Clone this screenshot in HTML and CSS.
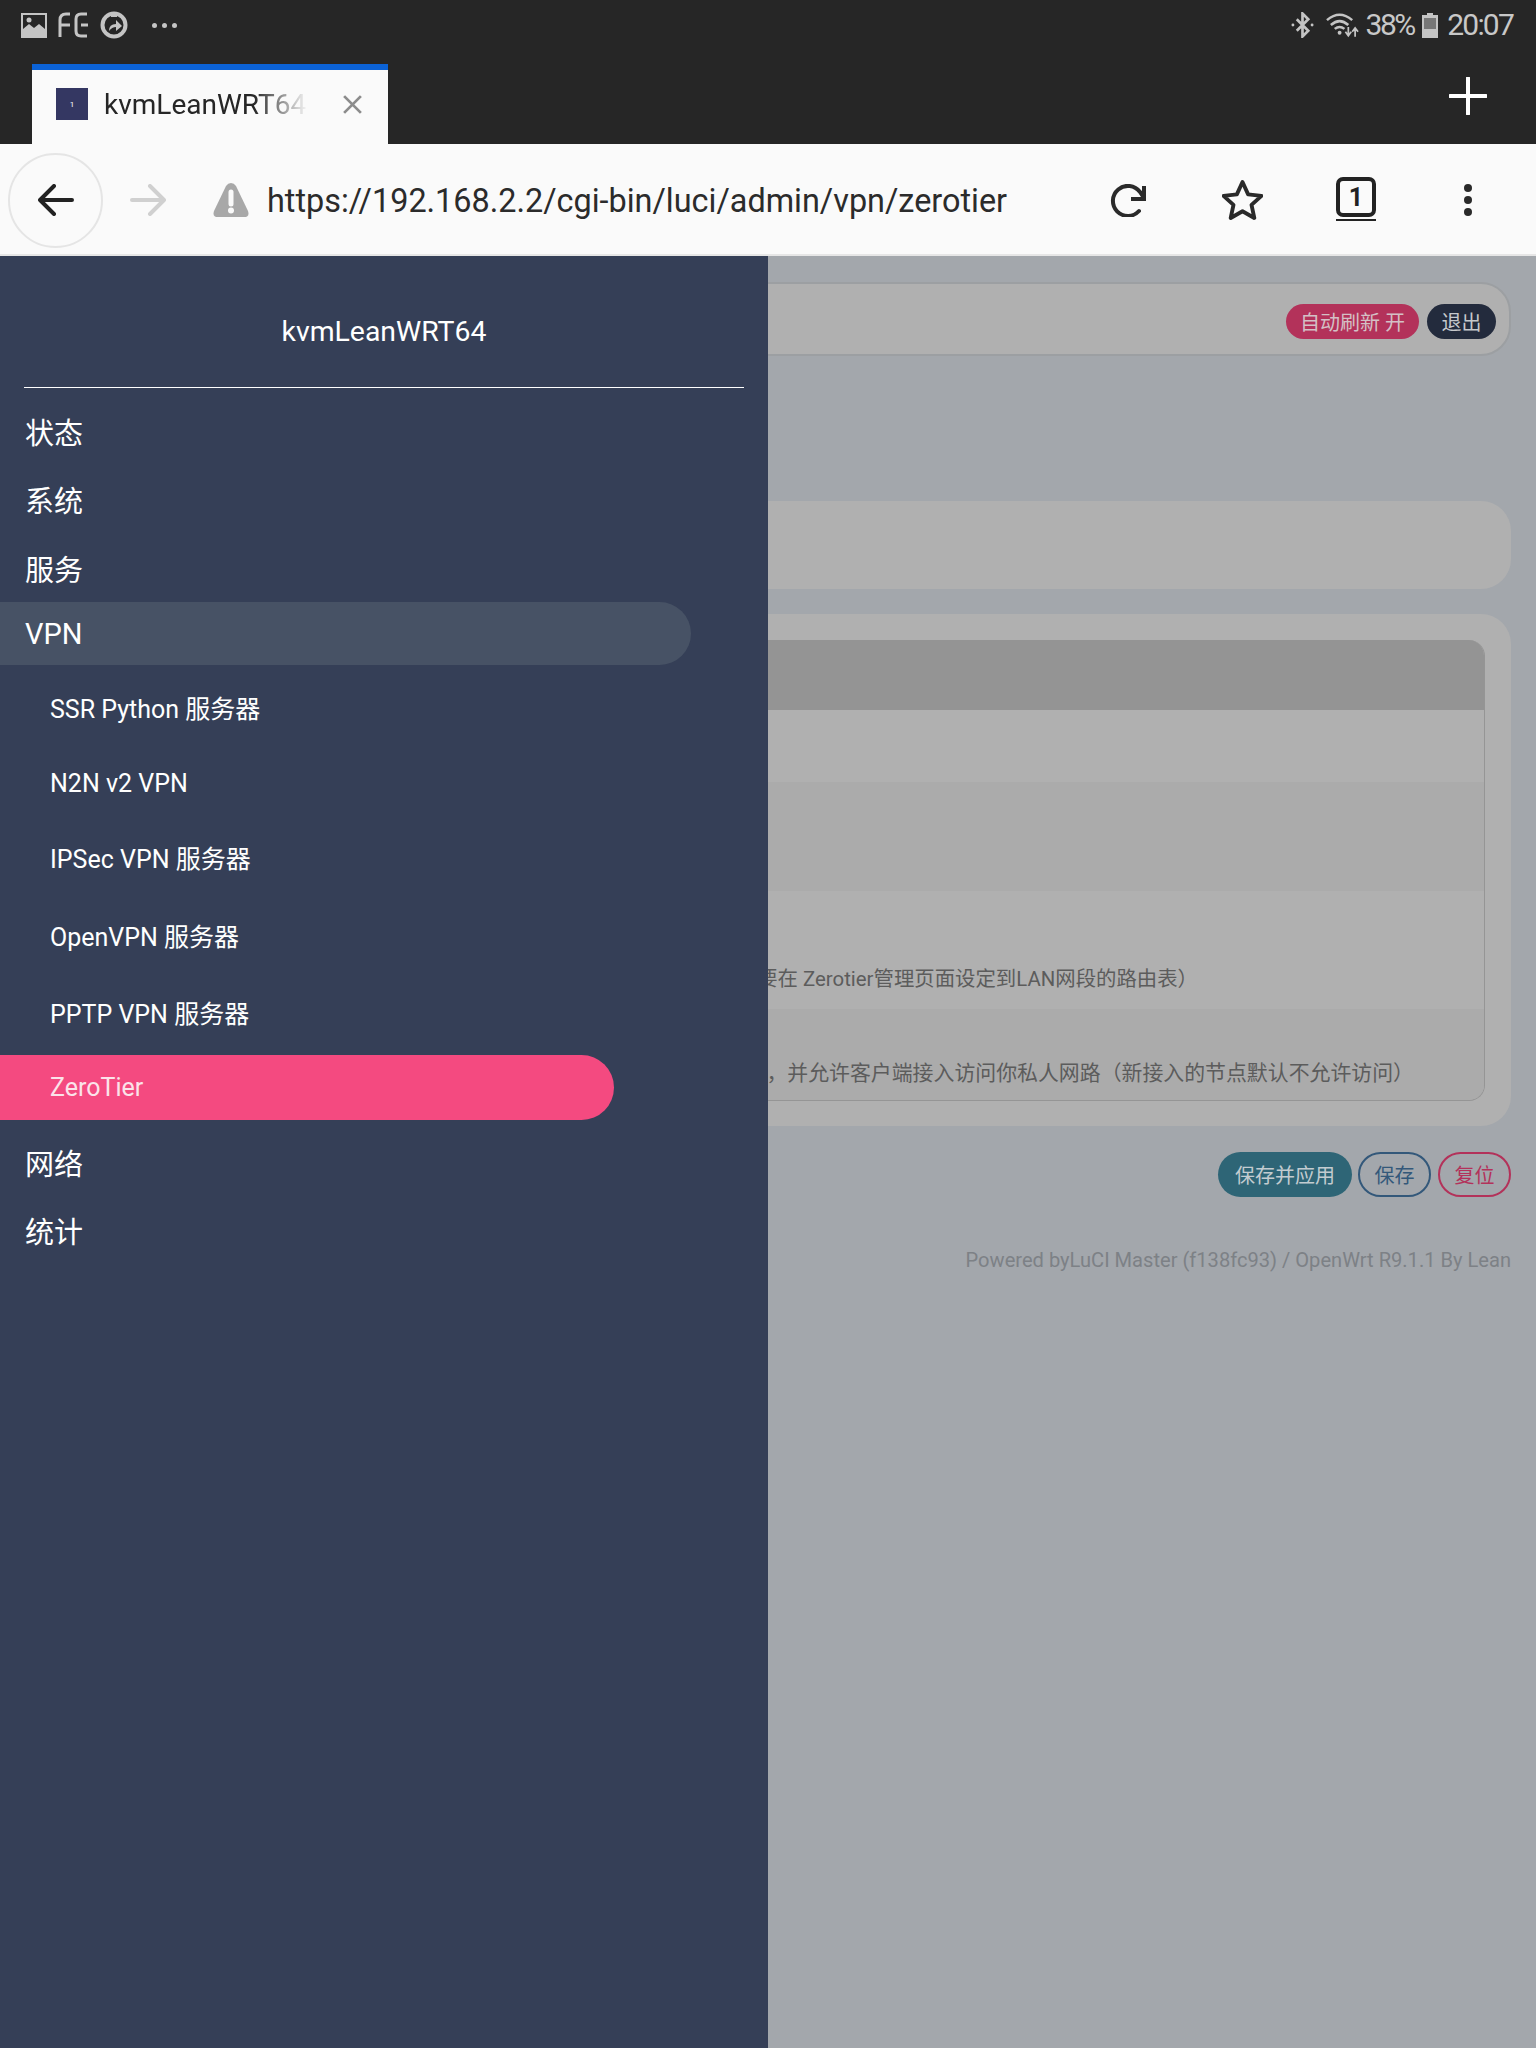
FILE: index.html
```html
<!DOCTYPE html>
<html lang="zh">
<head>
<meta charset="utf-8">
<title>kvmLeanWRT64</title>
<link rel="stylesheet" href="styles.css">
</head>
<body>
<header class="chrome">
  <div class="status">
    <div class="status-left">
      <svg class="ic-pic" viewBox="0 0 26 25"><rect x="1" y="1" width="24" height="23" fill="none" stroke="#c4c4c4" stroke-width="2"/><path d="M2 23V16l6-5 5 4 5-4 6 5v7z" fill="#c4c4c4"/><circle cx="8" cy="7" r="2.5" fill="#c4c4c4"/></svg>
      <svg class="ic-fe" viewBox="0 0 31 26"><path d="M2 25V8q0-6 6-6h4M2 13h10M29 2h-6q-5 0-5 5v12q0 5 5 5h6M23 13h7" fill="none" stroke="#c4c4c4" stroke-width="3"/></svg>
      <svg class="ic-share" viewBox="0 0 28 28"><circle cx="14" cy="14" r="11.500" fill="none" stroke="#c4c4c4" stroke-width="4"/><rect x="11" y="1" width="6" height="5" fill="#c4c4c4"/><path d="M9 20q0-7 7-7V9l6 6-6 5v-4q-4 0-7 4z" fill="#c4c4c4"/></svg>
      <span class="dots"><i></i><i></i><i></i></span>
    </div>
    <div class="status-right">
      <svg class="ic-bt" viewBox="0 0 24 26"><path d="M6 7l12 12-6 6V1l6 6L6 19" fill="none" stroke="#c4c4c4" stroke-width="2.800"/><circle cx="2" cy="13" r="1.500" fill="#c4c4c4"/><circle cx="22" cy="13" r="1.500" fill="#c4c4c4"/></svg>
      <svg class="ic-wifi" viewBox="0 0 34 26"><path d="M1 8q13-11 26 0M5 13q9-8 18 0M9 17q5-4 10 0" fill="none" stroke="#c4c4c4" stroke-width="2.600"/><circle cx="14" cy="21" r="2" fill="#c4c4c4"/><path d="M23 15v8M20 20l3 4 3-4M30 25v-8M27 20l3-4 3 4" fill="none" stroke="#c4c4c4" stroke-width="1.800"/></svg>
      <span class="pct">38%</span>
      <svg class="ic-bat" viewBox="0 0 16 25"><rect x="5" y="0" width="6" height="3" fill="#c4c4c4"/><rect x="0" y="2" width="16" height="23" fill="#c4c4c4"/><rect x="2" y="5" width="12" height="11" fill="#777"/></svg>
      <span class="time">20:07</span>
    </div>
  </div>
  <div class="tabstrip">
    <div class="tab">
      <span class="favicon">1</span>
      <span class="tab-title">kvmLeanWRT64</span>
      <svg class="ic-close" viewBox="0 0 20 20"><path d="M2 2l16 16M18 2L2 18" stroke="#8c8c8c" stroke-width="2.600" fill="none"/></svg>
    </div>
    <svg class="ic-plus" viewBox="0 0 38 38"><path d="M19 1v36M1 19h36" stroke="#fff" stroke-width="4" stroke-linecap="round" fill="none"/></svg>
  </div>
  <div class="toolbar">
    <span class="back-ring">
      <svg class="ic-nav" viewBox="0 0 36 32"><path d="M34 16H2M16 2L2 16l14 14" fill="none" stroke="#222" stroke-width="4" stroke-linecap="round" stroke-linejoin="round"/></svg>
    </span>
    <svg class="ic-nav ic-fwd" viewBox="0 0 36 32"><path d="M2 16h32M20 2l14 14-14 14" fill="none" stroke="#d0d0d0" stroke-width="4" stroke-linecap="round" stroke-linejoin="round"/></svg>
    <svg class="ic-warn" viewBox="0 0 36 36"><path d="M18 1q3 0 5 3l12 25q2 6-4 6H5q-6 0-4-6L13 4q2-3 5-3z" fill="#a8a8a8"/><path d="M18 10v12" stroke="#fafafa" stroke-width="5" stroke-linecap="round"/><circle cx="18" cy="28.500" r="3" fill="#fafafa"/></svg>
    <span class="url">https://192.168.2.2/cgi-bin/luci/admin/vpn/zerotier</span>
    <div class="tools">
      <svg class="ic-reload" viewBox="0 0 37 33"><path d="M30 27A15 15 0 1 1 31 8l4 6" fill="none" stroke="#2a2a2a" stroke-width="4" stroke-linecap="round"/><path d="M35 2v13H22" fill="none" stroke="#2a2a2a" stroke-width="4"/></svg>
      <svg class="ic-star" viewBox="1 1 40 39"><path d="M21 3l5.500 12 13 1.500-9.700 8.800 2.700 12.700L21 31.500 9.500 38l2.700-12.700L2.500 16.500l13-1.500z" fill="none" stroke="#2a2a2a" stroke-width="3.800" stroke-linejoin="round"/></svg>
      <span class="tabcount">1</span>
      <span class="kebab"><i></i><i></i><i></i></span>
    </div>
  </div>
</header>

<main class="page">
  <div class="topbar">
    <span class="pill pill-red">自动刷新 开</span>
    <span class="pill pill-dark">退出</span>
  </div>
  <div class="panel panel-desc"></div>
  <div class="panel panel-form">
    <div class="table">
      <div class="thead"></div>
      <div class="row row-a"></div>
      <div class="row row-b"></div>
      <div class="row row-c"><span class="hint">需要在 Zerotier管理页面设定到LAN网段的路由表）</span></div>
      <div class="row row-d"><span class="hint">允许客户端访问你私人网路，并允许客户端接入访问你私人网路（新接入的节点默认不允许访问）</span></div>
    </div>
  </div>
  <div class="actions">
    <span class="btn btn-apply">保存并应用</span>
    <span class="btn btn-save">保存</span>
    <span class="btn btn-reset">复位</span>
  </div>
  <footer class="foot">Powered byLuCI Master (f138fc93) / OpenWrt R9.1.1 By Lean</footer>
</main>

<nav class="drawer">
  <div class="brand">kvmLeanWRT64</div>
  <ul class="menu">
    <li class="m m1">状态</li>
    <li class="m m2">系统</li>
    <li class="m m3">服务</li>
    <li class="m m-vpn">VPN</li>
    <li class="s s1">SSR Python 服务器</li>
    <li class="s s2">N2N v2 VPN</li>
    <li class="s s3">IPSec VPN 服务器</li>
    <li class="s s4">OpenVPN 服务器</li>
    <li class="s s5">PPTP VPN 服务器</li>
    <li class="s s-active">ZeroTier</li>
    <li class="m m5">网络</li>
    <li class="m m6">统计</li>
  </ul>
</nav>
</body>
</html>
```

FILE: styles.css
```css
* { box-sizing: border-box; }
html, body { margin: 0; padding: 0; }
body {
  width: 1536px;
  height: 2048px;
  position: relative;
  overflow: hidden;
  background: #a3a7ac;
  font-family: Roboto, "Noto Sans CJK SC", sans-serif;
}
ul { list-style: none; margin: 0; padding: 0; }

/* browser chrome */
.chrome { background: #262626; }
.status { height: 64px; display: flex; justify-content: space-between; align-items: center; padding: 0 23px 14px 21px; color: #c8c8c8; }
.status-left, .status-right { display: flex; align-items: center; }
.ic-pic { width: 26px; height: 25px; }
.ic-fe { width: 31px; height: 26px; margin-left: 11px; }
.ic-share { width: 28px; height: 28px; margin-left: 11px; }
.dots { display: flex; gap: 5px; margin-left: 24px; }
.dots i { width: 5px; height: 5px; border-radius: 50%; background: #c4c4c4; }
.ic-bt { width: 23px; height: 26px; }
.ic-wifi { width: 33px; height: 26px; margin-left: 12px; }
.pct { font-size: 30px; letter-spacing: -2.500px; margin-left: 7px; line-height: 26px; }
.ic-bat { width: 16px; height: 25px; margin-left: 8.500px; }
.time { font-size: 30px; letter-spacing: -1.800px; margin-left: 9px; line-height: 26px; }

.tabstrip { height: 80px; position: relative; display: flex; justify-content: space-between; }
.tab { width: 356px; height: 80px; margin-left: 32px; background: #fafafa; border-top: 6px solid #0b62d6; display: flex; align-items: center; padding: 0 0 0 24px; position: relative; }
.favicon { width: 32px; height: 32px; background: #343762; color: #fff; font-size: 8px; display: flex; align-items: center; justify-content: center; margin-top: -6px; }
.tab-title { font-size: 28px; margin-left: 16px; width: 206px; overflow: hidden; white-space: nowrap; color: #262626; margin-top: -5px; -webkit-mask-image: linear-gradient(90deg, #000 150px, transparent 204px); mask-image: linear-gradient(90deg, #000 150px, transparent 204px); }
.ic-close { width: 21px; height: 21px; margin-left: 32px; margin-top: -6px; }
.ic-plus { width: 38px; height: 38px; margin: 13px 49px 0 0; }

.toolbar { height: 112px; background: #fafafa; border-bottom: 2px solid #e6e6e6; padding-top: 2px; display: flex; align-items: center; position: relative; }
.back-ring { width: 95px; height: 95px; margin-left: 8px; border: 2px solid #e5e5e5; border-radius: 50%; display: flex; align-items: center; justify-content: center; flex: none; }
.ic-nav { width: 36px; height: 32px; flex: none; }
.ic-fwd { margin-left: 27px; }
.ic-warn { width: 36px; height: 36px; margin-left: 47px; flex: none; }
.url { font-size: 32.400px; color: #2b2b2b; margin: 2px 0 0 18px; white-space: nowrap; }
.tools { position: absolute; right: 0; top: 0; bottom: 0; width: 460px; }
.ic-reload { position: absolute; left: 33px; top: 40px; width: 37px; height: 33px; }
.ic-star { position: absolute; left: 145.500px; top: 35.500px; width: 41px; height: 40px; }
.tabcount { position: absolute; left: 260px; top: 33px; width: 40px; height: 40px; border: 4.500px solid #222; border-radius: 7px; font-size: 25px; font-weight: 700; color: #222; display: flex; align-items: center; justify-content: center; }
.tabcount::after { content: ""; position: absolute; left: -4px; right: -4px; top: 38px; height: 2px; background: #222; }
.kebab { position: absolute; left: 388px; top: 40px; display: flex; flex-direction: column; gap: 4px; }
.kebab i { width: 8px; height: 8px; border-radius: 50%; background: #2a2a2a; }

/* dimmed page */
.page { padding: 26px 25px 0 26px; }
.topbar { height: 74px; background: #b0b0b0; border: 2px solid #9c9fa2; border-radius: 30px; display: flex; justify-content: flex-end; align-items: center; gap: 8px; padding: 4px 13px 0 0; }
.pill { height: 35px; border-radius: 17.500px; display: inline-flex; align-items: center; justify-content: center; font-size: 20px; }
.pill-red { width: 133px; background: #b3325a; color: #d4c0c6; }
.pill-dark { width: 69px; background: #232b3d; color: #c6c8cc; }
.panel { background: #b0b0b0; border-radius: 30px; }
.panel-desc { height: 88px; margin-top: 145px; }
.panel-form { height: 512px; margin-top: 25px; padding: 26px 26px 25px; }
.table { height: 461px; border: 1px solid #959595; border-top: 0; border-radius: 16px; overflow: hidden; display: flex; flex-direction: column; }
.thead { height: 70px; background: #949494; }
.row { position: relative; }
.row-a { height: 72px; background: #b0b0b0; }
.row-b { height: 109px; background: #ababab; }
.row-c { height: 118px; background: #b0b0b0; }
.row-d { flex: 1; background: #ababab; }
.hint { position: absolute; color: #5c5c5c; white-space: nowrap; }
.row-c .hint { top: 71px; right: 286px; font-size: 20.400px; }
.row-d .hint { top: 47px; right: 70px; font-size: 20.900px; }
.actions { display: flex; justify-content: flex-end; gap: 6px; margin-top: 26px; }
.btn { height: 45px; border-radius: 22.500px; font-size: 20px; display: inline-flex; align-items: center; justify-content: center; }
.btn-apply { width: 134px; background: #2e6576; color: #c3ccd0; }
.btn-save { width: 73px; border: 2px solid #33587a; color: #33587a; }
.btn-reset { width: 73px; margin-left: 1px; border: 2px solid #b3325a; color: #b3325a; }
.foot { text-align: right; font-size: 20.100px; color: #7d8186; margin-top: 50px; line-height: 26px; }

/* drawer */
.drawer { position: absolute; left: 0; top: 256px; width: 768px; height: 1792px; background: #353f57; color: #fff; }
.brand { height: 132px; margin: 0 24px; border-bottom: 1px solid #fff; text-align: center; font-size: 28.400px; line-height: 151px; }
.m { font-size: 29px; padding-left: 25px; line-height: 40px; }
.s { font-size: 25px; padding-left: 50px; line-height: 34px; }
.m1 { margin-top: 26px; }
.m2 { margin-top: 28px; }
.m3 { margin-top: 29px; }
.m-vpn { margin-top: 11px; width: 691px; height: 63px; line-height: 65px; background: #475265; border-radius: 0 32px 32px 0; }
.s1 { margin-top: 28px; }
.s2 { margin-top: 40px; }
.s3 { margin-top: 42px; }
.s4 { margin-top: 44px; }
.s5 { margin-top: 43px; }
.s-active { margin-top: 23px; width: 614px; height: 65px; line-height: 65px; background: #f44a80; border-radius: 0 33px 33px 0; color: #fbe3ea; }
.m5 { margin-top: 25px; }
.m6 { margin-top: 28px; }
```
